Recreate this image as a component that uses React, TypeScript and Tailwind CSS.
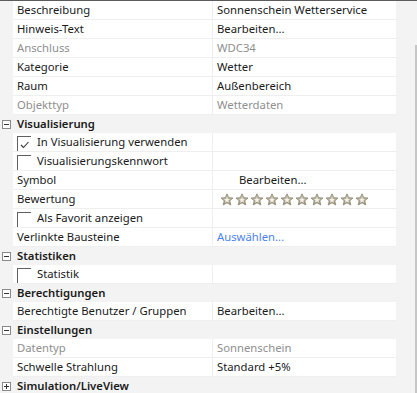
import React from "react";

type Row =
  | { kind: "header"; label: string; open: boolean }
  | { kind: "prop"; label: string; value?: string; tone?: "dim" | "link"; indent?: boolean }
  | { kind: "check"; label: string; checked?: boolean }
  | { kind: "stars"; label: string };

const ROWS: Row[] = [
  { kind: "prop", label: "Beschreibung", value: "Sonnenschein Wetterservice" },
  { kind: "prop", label: "Hinweis-Text", value: "Bearbeiten..." },
  { kind: "prop", label: "Anschluss", value: "WDC34", tone: "dim" },
  { kind: "prop", label: "Kategorie", value: "Wetter" },
  { kind: "prop", label: "Raum", value: "Außenbereich" },
  { kind: "prop", label: "Objekttyp", value: "Wetterdaten", tone: "dim" },
  { kind: "header", label: "Visualisierung", open: true },
  { kind: "check", label: "In Visualisierung verwenden", checked: true },
  { kind: "check", label: "Visualisierungskennwort" },
  { kind: "prop", label: "Symbol", value: "Bearbeiten...", indent: true },
  { kind: "stars", label: "Bewertung" },
  { kind: "check", label: "Als Favorit anzeigen" },
  { kind: "prop", label: "Verlinkte Bausteine", value: "Auswählen...", tone: "link" },
  { kind: "header", label: "Statistiken", open: true },
  { kind: "check", label: "Statistik" },
  { kind: "header", label: "Berechtigungen", open: true },
  { kind: "prop", label: "Berechtigte Benutzer / Gruppen", value: "Bearbeiten..." },
  { kind: "header", label: "Einstellungen", open: true },
  { kind: "prop", label: "Datentyp", value: "Sonnenschein", tone: "dim" },
  { kind: "prop", label: "Schwelle Strahlung", value: "Standard +5%" },
  { kind: "header", label: "Simulation/LiveView", open: false },
];

const ExpandBox = ({ open }: { open: boolean }) => (
  <svg width="9" height="9" viewBox="0 0 9 9" className="shrink-0">
    <rect x="0.5" y="0.5" width="8" height="8" fill="#fff" stroke="#8a8a8a" />
    <line x1="2" y1="4.5" x2="7" y2="4.5" stroke="#333" />
    {!open && <line x1="4.5" y1="2" x2="4.5" y2="7" stroke="#333" />}
  </svg>
);

const Star = () => (
  <svg width="14" height="13" viewBox="0 0 14 13" className="shrink-0">
    <defs>
      <linearGradient id="sg" x1="0" y1="0" x2="0" y2="1">
        <stop offset="0" stopColor="#cfc8b4" />
        <stop offset="1" stopColor="#9c9480" />
      </linearGradient>
    </defs>
    <path
      d="M7 0.8 L8.8 4.7 L13 5 L9.8 7.8 L10.8 12 L7 9.8 L3.2 12 L4.2 7.8 L1 5 L5.2 4.7 Z"
      fill="url(#sg)"
      stroke="#8d866f"
      strokeWidth="0.8"
      strokeLinejoin="round"
    />
    <path
      d="M7 4 L7.9 6 L10 6.2 L8.4 7.6 L8.9 9.7 L7 8.6 L5.1 9.7 L5.6 7.6 L4 6.2 L6.1 6 Z"
      fill="#f4f1ea"
    />
  </svg>
);

const CheckBox = ({ checked }: { checked?: boolean }) => (
  <div className="w-[14px] h-[15px] mt-[3px] self-start border-t border-l border-[#5f5f5f] bg-white shrink-0 relative">
    {checked && (
      <svg width="10" height="8" viewBox="0 0 10 8" className="absolute left-[2px] top-[4px]">
        <path d="M1 4 L3.5 6.5 L8.5 1" fill="none" stroke="#333" strokeWidth="1.1" />
      </svg>
    )}
  </div>
);

const toneClass = (tone?: "dim" | "link") =>
  tone === "dim" ? "text-[#8f8f8f]" : tone === "link" ? "text-[#4d82f0]" : "text-[#1a1a1a]";

export default function App() {
  return (
    <div
      className="w-[417px] h-[393px] overflow-hidden bg-[#f3f3f3] border-t border-[#5c5c5c] flex text-[11.3px] leading-[18px]"
      style={{ fontFamily: "'Segoe UI', 'Noto Sans', 'Open Sans', sans-serif" }}
    >
      <div className="w-[396px] flex flex-col shrink-0">
        {ROWS.map((r, i) => {
          if (r.kind === "header") {
            return (
              <div key={i} className="h-[19px] flex items-center">
                <div className="w-[17px] pl-[2px] flex items-center">
                  <ExpandBox open={r.open} />
                </div>
                <span className="font-semibold text-[#1a1a1a]">{r.label}</span>
              </div>
            );
          }
          return (
            <div key={i} className="h-[19px] flex">
              <div className="w-[13px] shrink-0" />
              <div className="flex-1 flex bg-white border-b border-[#efefef]">
                <div className="w-[200px] shrink-0 flex pl-[4px] border-r border-[#efefef] whitespace-nowrap">
                  {r.kind === "check" ? (
                    <>
                      <CheckBox checked={r.checked} />
                      <span className="pl-[6px] text-[#1a1a1a]">{r.label}</span>
                    </>
                  ) : (
                    <span className={r.kind === "prop" && r.tone === "dim" ? "text-[#8f8f8f]" : "text-[#1a1a1a]"}>
                      {r.label}
                    </span>
                  )}
                </div>
                <div className="flex-1 flex items-center whitespace-nowrap">
                  {r.kind === "prop" && (
                    <span className={`${r.indent ? "pl-[26px]" : "pl-[4px]"} ${toneClass(r.tone)}`}>{r.value}</span>
                  )}
                  {r.kind === "stars" && (
                    <div className="flex gap-[1px] pl-[7px]">
                      {Array.from({ length: 10 }).map((_, k) => (
                        <Star key={k} />
                      ))}
                    </div>
                  )}
                </div>
              </div>
            </div>
          );
        })}
      </div>
      <div className="flex-1 flex justify-end">
        <div className="w-[2px] mt-[44px] bg-[#c6c6c6]" />
      </div>
    </div>
  );
}
